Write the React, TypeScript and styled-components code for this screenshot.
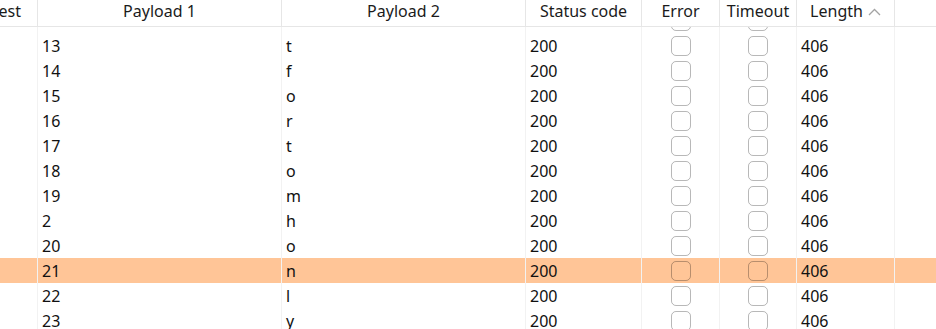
import React, { useLayoutEffect, useRef } from "react";
import styled, { createGlobalStyle } from "styled-components";

const Global = createGlobalStyle`
  html, body { margin: 0; padding: 0; background: #fff; }
  body { font-family: "Noto Sans", "Open Sans", sans-serif; }
`;

const COLS = "38px 244px 244px 116px 78px 77px 98px 1fr";

const Table = styled.div`
  width: 936px;
  height: 329px;
  overflow: hidden;
  background: #fff;
  display: flex;
  flex-direction: column;
  font-size: 16px;
`;

const HeaderRow = styled.div`
  display: grid;
  grid-template-columns: ${COLS};
  height: 26px;
  border-bottom: 1px solid #e6e6e6;
  flex: none;
`;

const HeaderCell = styled.div<{ $align?: "end" | "center" }>`
  box-sizing: border-box;
  display: flex;
  align-items: center;
  justify-content: ${(p) => (p.$align === "end" ? "flex-end" : "center")};
  padding-right: ${(p) => (p.$align === "end" ? "16px" : "0")};
  padding-bottom: 4px;
  border-right: 1px solid #e6e6e6;
  overflow: hidden;
  white-space: nowrap;
  color: #1b1b1b;
  line-height: 20px;
  &:last-child { border-right: none; }
`;

const SortIcon = styled.svg`
  margin-left: 5px;
  margin-top: 2px;
  flex: none;
`;

const Body = styled.div`
  flex: 1;
  overflow: hidden;
`;

const Row = styled.div<{ $selected?: boolean }>`
  display: grid;
  grid-template-columns: ${COLS};
  height: 25px;
  background: ${(p) => (p.$selected ? "#ffc597" : "transparent")};
`;

const Cell = styled.div`
  display: flex;
  align-items: center;
  padding-left: 4px;
  border-right: 1px solid #f2f2f2;
  color: #111;
  white-space: nowrap;
  &:last-child { border-right: none; }
`;

const BoxCell = styled(Cell)`
  justify-content: center;
  padding-left: 0;
`;

const Check = styled.span`
  box-sizing: border-box;
  width: 20px;
  height: 20px;
  border: 1.5px solid rgba(0, 0, 0, 0.28);
  border-radius: 5px;
  background: transparent;
`;

const rows: Array<[string, string]> = [
  ["12", "e"],
  ["13", "t"],
  ["14", "f"],
  ["15", "o"],
  ["16", "r"],
  ["17", "t"],
  ["18", "o"],
  ["19", "m"],
  ["2", "h"],
  ["20", "o"],
  ["21", "n"],
  ["22", "l"],
  ["23", "y"],
];

export default function App() {
  const bodyRef = useRef<HTMLDivElement>(null);
  useLayoutEffect(() => {
    if (bodyRef.current) bodyRef.current.scrollTop = 19;
  }, []);
  return (
    <>
      <Global />
      <Table>
        <HeaderRow>
          <HeaderCell $align="end">Request</HeaderCell>
          <HeaderCell>Payload 1</HeaderCell>
          <HeaderCell>Payload 2</HeaderCell>
          <HeaderCell>Status code</HeaderCell>
          <HeaderCell>Error</HeaderCell>
          <HeaderCell>Timeout</HeaderCell>
          <HeaderCell>
            Length
            <SortIcon width="13" height="8" viewBox="0 0 13 8">
              <polyline
                points="1,7 6.5,1.5 12,7"
                fill="none"
                stroke="#a3a3a3"
                strokeWidth="1.3"
              />
            </SortIcon>
          </HeaderCell>
          <HeaderCell />
        </HeaderRow>
        <Body ref={bodyRef}>
          {rows.map(([p1, p2]) => (
            <Row key={p1} $selected={p1 === "21"}>
              <Cell />
              <Cell>{p1}</Cell>
              <Cell>{p2}</Cell>
              <Cell>200</Cell>
              <BoxCell>
                <Check />
              </BoxCell>
              <BoxCell>
                <Check />
              </BoxCell>
              <Cell>406</Cell>
              <Cell />
            </Row>
          ))}
        </Body>
      </Table>
    </>
  );
}
